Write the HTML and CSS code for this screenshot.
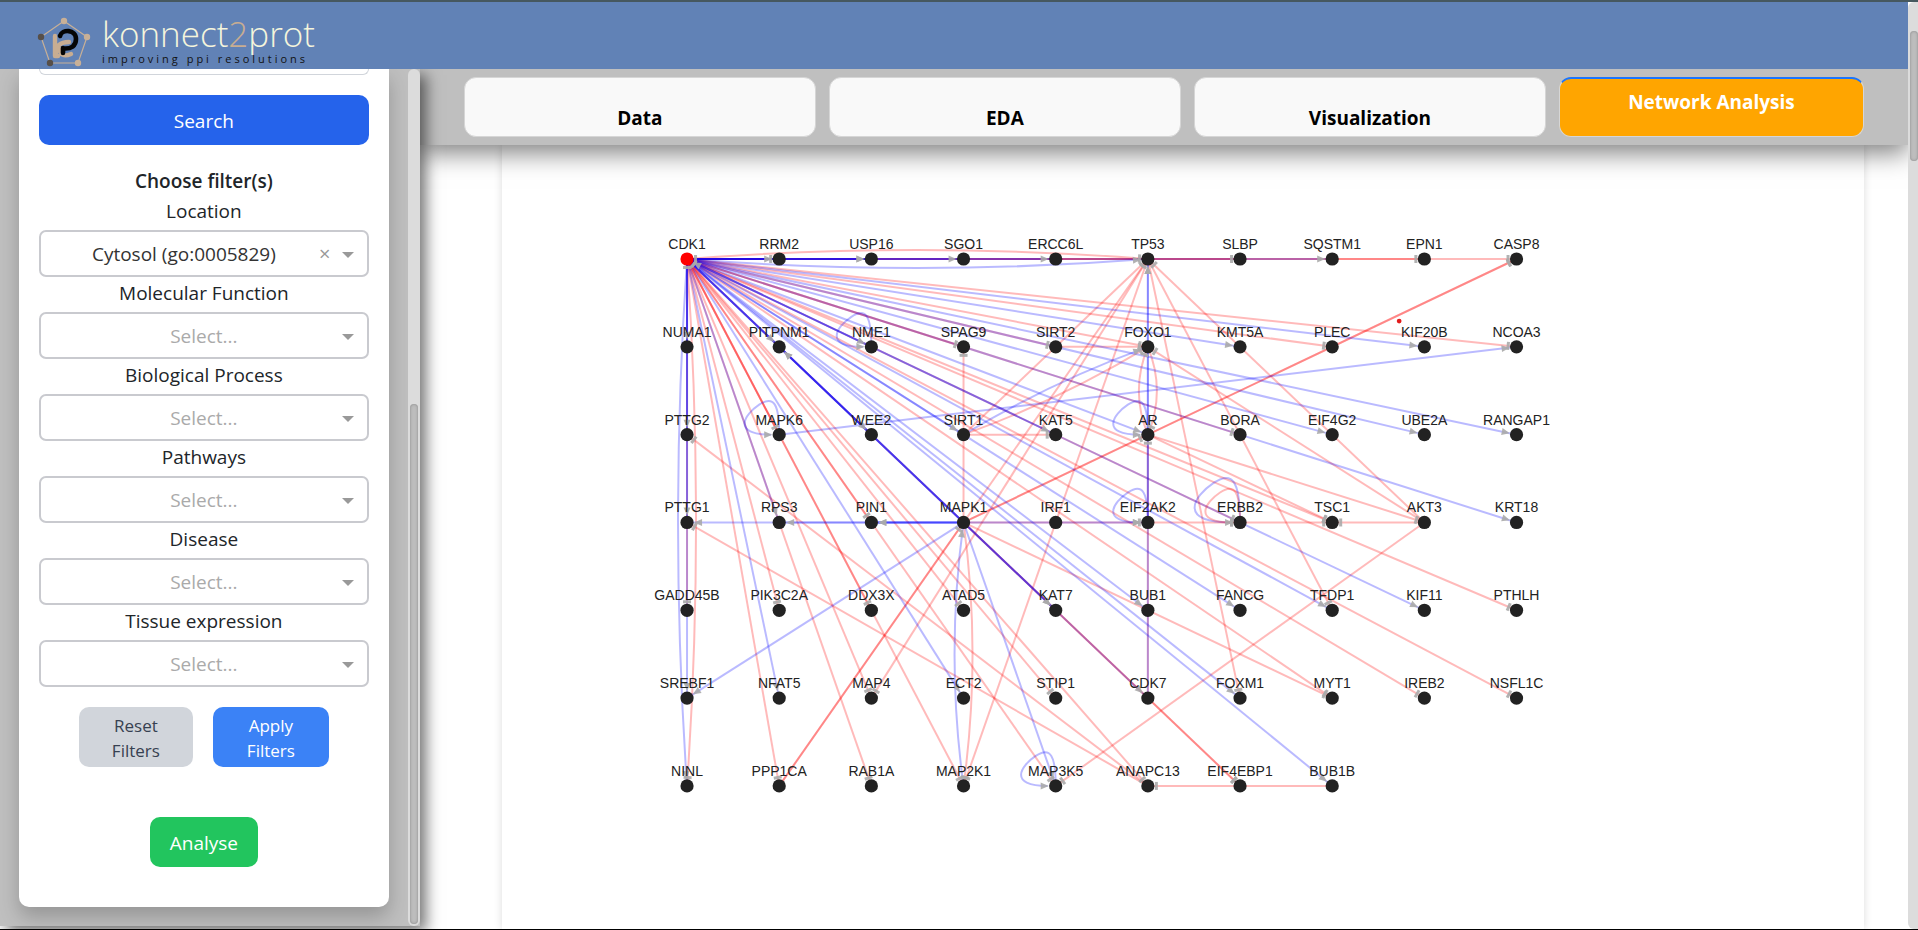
FILE: index.html
```html
<!DOCTYPE html>
<html lang="en">
<head>
<meta charset="utf-8">
<title>konnect2prot</title>
<link rel="stylesheet" href="styles.css">
</head>
<body>
<div class="page">
  <header class="header">
    <svg class="logo-mark" viewBox="0 0 52 52" aria-hidden="true">
      <path d="M26 5 49 21 40 47H12L3 21Z" fill="none" stroke="#c8b097" stroke-width="1.2"/>
      <g fill="none" stroke-linecap="round" stroke-linejoin="round">
        <path d="M17 20V40H20M18 38C18 29 23 26 31 26M22 33C22 39 26 41 33 38" stroke="#c8ad92" stroke-width="4.4"/>
        <path d="M22 20C24 13 38 13 38 23C38 30 33 33 26 32.500M25 32V37" stroke="#050505" stroke-width="4.600"/>
      </g>
      <g fill="#c8b097"><circle cx="26" cy="5" r="3.200"/><circle cx="49" cy="21" r="3.200"/><circle cx="40" cy="47" r="3.200"/></g>
      <g fill="#574f48"><circle cx="3" cy="21" r="3.200"/><circle cx="12" cy="47" r="3.200"/></g>
    </svg>
    <div class="brand">
      <div class="brand-name">konnect<span class="brand-two">2</span>prot</div>
      <div class="brand-tag">improving ppi resolutions</div>
    </div>
  </header>
  <div class="body">
    <aside class="sidebar">
      <form class="card">
        <input class="query" type="text" aria-label="Query">
        <button class="btn search" type="button">Search</button>
        <h2 class="title">Choose filter(s)</h2>
        <label class="label" for="f1">Location</label>
        <div class="select has-value">
          <select id="f1"><option>Cytosol (go:0005829)</option></select>
          <button class="clear" type="button" aria-label="Clear location">×</button>
        </div>
        <label class="label" for="f2">Molecular Function</label>
        <div class="select"><select id="f2"><option>Select...</option></select></div>
        <label class="label" for="f3">Biological Process</label>
        <div class="select"><select id="f3"><option>Select...</option></select></div>
        <label class="label" for="f4">Pathways</label>
        <div class="select"><select id="f4"><option>Select...</option></select></div>
        <label class="label" for="f5">Disease</label>
        <div class="select"><select id="f5"><option>Select...</option></select></div>
        <label class="label" for="f6">Tissue expression</label>
        <div class="select"><select id="f6"><option>Select...</option></select></div>
        <div class="actions">
          <button class="btn reset" type="button">Reset<br>Filters</button>
          <button class="btn apply" type="button">Apply<br>Filters</button>
        </div>
        <button class="btn analyse" type="button">Analyse</button>
      </form>
      <div class="side-scroll"><div class="side-thumb"></div></div>
    </aside>
    <main class="main">
      <nav class="tabs">
        <button class="tab" type="button">Data</button>
        <button class="tab" type="button">EDA</button>
        <button class="tab" type="button">Visualization</button>
        <button class="tab active" type="button">Network Analysis</button>
      </nav>
      <section class="panel">
        <svg class="graph" id="graph" viewBox="0 0 1362 784" role="img" aria-label="Protein interaction network"></svg>
      </section>
    </main>
  </div>
</div>
<div class="page-scroll"><div class="page-thumb"></div></div>
<script src="script.js"></script>
</body>
</html>
```

FILE: styles.css
```css
* { box-sizing: border-box; }

body {
  margin: 0;
  height: 100vh;
  display: grid;
  grid-template-columns: 1fr 10px;
  overflow: hidden;
  border-top: 2px solid #46585f;
  border-bottom: 1px solid #000;
  background: #fff;
  color: #212529;
  font-family: "Open Sans", "Noto Sans", sans-serif;
  font-size: 19px;
}

button, select, input { font: inherit; }

.page {
  display: flex;
  flex-direction: column;
  min-width: 0;
  min-height: 0;
  overflow: hidden;
}

.header {
  position: relative;
  z-index: 3;
  display: flex;
  align-items: center;
  gap: 11px;
  flex: none;
  height: 67px;
  padding: 13px 0 0 37px;
  background: #6182b6;
}

.logo-mark { width: 54px; height: 52px; }
.brand { display: flex; flex-direction: column; }
.brand-name {
  color: #f5f5dc;
  font-size: 35px;
  font-weight: 300;
  line-height: 34px;
}
.brand-two { color: #c8ad92; }
.brand-tag {
  color: #111;
  font-size: 11px;
  line-height: 16px;
  letter-spacing: 3px;
  white-space: nowrap;
}

.body { flex: 1; display: flex; min-height: 0; }

.sidebar {
  position: relative;
  z-index: 2;
  width: 22%;
  display: flex;
  align-items: flex-start;
  justify-content: space-between;
  padding-left: 19px;
  margin-bottom: 3px;
  background: #bfbfbf;
  box-shadow: 6px 6px 14px rgba(0, 0, 0, 0.55);
}

.card {
  flex: 1;
  display: flex;
  flex-direction: column;
  margin-right: 19px;
  padding: 0 20px 40px;
  background: #fff;
  border-radius: 0 0 10px 10px;
  box-shadow: 0 10px 20px rgba(0, 0, 0, 0.22);
}

.query {
  height: 6px;
  margin-bottom: 20px;
  padding: 0;
  border: 1px solid #d1d5db;
  border-top: 0;
  border-radius: 0 0 8px 8px;
}

.btn {
  border: 0;
  border-radius: 10px;
  color: #fff;
  cursor: pointer;
}
.search { height: 50px; padding-top: 2px; background: #2563eb; }

.title {
  margin: 22px 0 0;
  font-size: 19px;
  font-weight: 600;
  line-height: 28px;
  text-align: center;
}

.label { padding-bottom: 2px; line-height: 33px; text-align: center; }

.select { position: relative; height: 47px; }
.select select {
  width: 100%;
  height: 100%;
  padding: 0;
  border: 2px solid #c9cacf;
  border-radius: 7px;
  background: #fff;
  color: #aaa;
  text-align: center;
  text-align-last: center;
  appearance: none;
}
.select::after {
  content: "";
  position: absolute;
  right: 15px;
  top: 22px;
  border: 6px solid transparent;
  border-top-color: #999;
  border-bottom: 0;
  pointer-events: none;
}
.has-value select { padding-right: 40px; color: #333; }
.clear {
  position: absolute;
  right: 36px;
  top: 10px;
  width: 16px;
  padding: 0;
  border: 0;
  background: none;
  color: #999;
  font-size: 20px;
  line-height: 28px;
}

.actions {
  display: flex;
  justify-content: center;
  gap: 20px;
  margin: 20px 0 50px;
}
.actions .btn { height: 60px; font-size: 17px; line-height: 25px; padding: 2px 0 0; }
.reset { width: 114px; background: #d1d5db; }
.btn.reset { color: #374151; }
.apply { width: 116px; background: #3b82f6; }
.analyse { align-self: center; width: 108px; height: 50px; padding-top: 2px; background: #22c55e; }

.side-scroll {
  align-self: stretch;
  width: 12px;
  flex: none;
  display: flex;
  flex-direction: column;
  justify-content: flex-end;
  padding: 2px;
  border-radius: 6px;
  background: #dcdcdc;
}
.side-thumb {
  height: 61%;
  border-radius: 4px;
  background: #bdbdbd;
  box-shadow: inset 0 0 3px #888;
}

.main { flex: 1; min-width: 0; display: flex; flex-direction: column; }

.tabs {
  position: relative;
  z-index: 1;
  display: grid;
  grid-template-columns: 352fr 352fr 352fr 305fr;
  gap: 13px;
  flex: none;
  padding: 8px 44px;
  background: #bfbfbf;
  box-shadow: 0 8px 24px rgba(0, 0, 0, 0.5);
}
.tab {
  height: 60px;
  padding: 22px 0 0;
  border: 1px solid #d6d6d6;
  border-radius: 12px;
  background: #f9f9f9;
  color: #000;
  font-size: 19px;
  font-weight: 700;
}
.tab.active {
  padding: 0 0 12px;
  border-top: 2px solid #1a75ff;
  background: #ffa500;
  color: #fff;
}

.panel {
  flex: 1;
  min-height: 0;
  margin: 0 44px 0 82px;
  background: #fff;
  box-shadow: 0 0 8px rgba(0, 0, 0, 0.14);
}
.graph { display: block; width: 100%; height: auto; }

.edge { fill: none; stroke-width: 2; stroke-opacity: 0.27; }
.pos { stroke: #00f; }
.neg { stroke: #f00; }
.tip { fill: #aaa; fill-opacity: 0.9; }
.node { fill: #222; }
.node.seed { fill: #f00; }
.cursor { fill: #e21b1b; }
.name {
  fill: #222;
  font-family: "Liberation Sans", Arial, sans-serif;
  font-size: 14px;
  text-anchor: middle;
}

.page-scroll { padding: 29px 0 0 2px; background: #dcdcdc; border-radius: 6px 0 0 6px; }
.page-thumb {
  height: 130px;
  border-radius: 4px;
  background: #bdbdbd;
  box-shadow: inset 0 0 3px #888;
}
```

FILE: script.js
```js
const rows = [
  "CDK1 RRM2 USP16 SGO1 ERCC6L TP53 SLBP SQSTM1 EPN1 CASP8",
  "NUMA1 PITPNM1 NME1 SPAG9 SIRT2 FOXO1 KMT5A PLEC KIF20B NCOA3",
  "PTTG2 MAPK6 WEE2 SIRT1 KAT5 AR BORA EIF4G2 UBE2A RANGAP1",
  "PTTG1 RPS3 PIN1 MAPK1 IRF1 EIF2AK2 ERBB2 TSC1 AKT3 KRT18",
  "GADD45B PIK3C2A DDX3X ATAD5 KAT7 BUB1 FANCG TFDP1 KIF11 PTHLH",
  "SREBF1 NFAT5 MAP4 ECT2 STIP1 CDK7 FOXM1 MYT1 IREB2 NSFL1C",
  "NINL PPP1CA RAB1A MAP2K1 MAP3K5 ANAPC13 EIF4EBP1 BUB1B"
];

// Each entry: source, kind (+ activates, - inhibits), targets.
// "name:n" bends the edge sideways by n units at its middle.
// Inhibiting edges lie under the activating ones.
const links = [
  ["CDK1", "-", "RRM2 TP53:9 SLBP EPN1 CASP8 GADD45B NINL:9"],
  ["CDK1", "-", "EIF4EBP1 ERBB2 SPAG9 BORA SIRT2 FOXO1 PLEC NCOA3"],
  ["CDK1", "-", "MAPK6 DDX3X MAP2K1 RAB1A PIK3C2A PPP1CA MAP4 PIN1 MAP3K5 TSC1 PTHLH ATAD5 STIP1 MYT1 IREB2 NSFL1C ANAPC13"],
  ["MAPK1", "-", "EIF2AK2 SPAG9 AR CASP8 MYT1 EIF4EBP1 MAP2K1:9"],
  ["AR", "-", "CASP8 TSC1 FOXO1:9 AKT3"],
  ["PPP1CA", "-", "MAPK1 TP53"],
  ["TP53", "-", "FOXM1 TFDP1 MAP4 MAP2K1"],
  ["SIRT1", "-", "TP53 FOXO1:-5 KAT5"],
  ["SIRT2", "-", "FOXO1"],
  ["AKT3", "-", "TP53 FOXO1 TSC1 MAP3K5"],
  ["FOXO1", "-", "AR:9"],
  ["CDK7", "-", "AR"],
  ["EIF2AK2", "-", "ERBB2"],
  ["ERBB2", "-", "TSC1"],
  ["ANAPC13", "-", "PTTG2 PTTG1"],
  ["BUB1B", "-", "ANAPC13"],
  ["CDK1", "+", "RRM2 USP16 USP16 SGO1 ERCC6L TP53:-9 SQSTM1 NUMA1 PTTG2 PTTG1 SREBF1 NINL:-9"],
  ["CDK1", "+", "PITPNM1 WEE2 KAT7 CDK7 NME1 KAT5 KIF11 KRT18 UBE2A KMT5A KIF20B"],
  ["CDK1", "+", "RPS3 NFAT5 SIRT1 FANCG AR EIF4G2 RANGAP1 ECT2 TFDP1 BUB1 FOXM1 BUB1B"],
  ["MAPK1", "+", "PITPNM1 PITPNM1 KAT7 PIN1 PIN1 RPS3 PTTG1 EIF2AK2 SREBF1 MAP3K5"],
  ["MAP2K1", "+", "MAPK1:9"],
  ["SIRT1", "+", "FOXO1:5"],
  ["CDK7", "+", "TP53"],
  ["EIF2AK2", "+", "TP53"],
  ["MAPK6", "+", "NCOA3"]
];

const loops = [["NME1", 1, "pos"], ["MAPK6", 1, "pos"], ["AR", 1, "pos"], ["EIF2AK2", 1, "pos"],
  ["MAP3K5", 1, "pos"], ["ERBB2", 1.32, "pos"], ["ERBB2", 1, "neg"]];

const graph = document.getElementById("graph");
const at = {};
rows.forEach((row, r) => row.split(" ").forEach((name, c) => {
  at[name] = { x: 185 + c * 92.15, y: 114 + r * 87.8 };
}));

function add(tag, attrs, text) {
  const el = document.createElementNS("http://www.w3.org/2000/svg", tag);
  for (const key in attrs) el.setAttribute(key, attrs[key]);
  if (text) el.textContent = text;
  graph.appendChild(el);
}

function tip(p, angle, kind) {
  const d = kind === "+" ? "M-7 0-15 3.500V-3.500Z" : "M-7-4H-10V4H-7Z";
  add("path", { class: "tip", d, transform: `translate(${p.x} ${p.y}) rotate(${angle * 180 / Math.PI})` });
}

const tips = [];
links.forEach(([from, kind, targets]) => targets.split(" ").forEach(target => {
  const [to, bend] = target.split(":");
  const a = at[from], b = at[to];
  const dx = b.x - a.x, dy = b.y - a.y, len = Math.hypot(dx, dy);
  const k = 2 * (bend || 0);
  const cx = (a.x + b.x) / 2 + k * dy / len;
  const cy = (a.y + b.y) / 2 - k * dx / len;
  add("path", { class: "edge " + (kind === "+" ? "pos" : "neg"), d: `M${a.x} ${a.y}Q${cx} ${cy} ${b.x} ${b.y}` });
  tips.push([b, Math.atan2(b.y - cy, b.x - cx), kind]);
}));

loops.forEach(([name, s, cls]) => {
  const p = at[name];
  add("path", { class: "edge " + cls,
    d: `M${p.x} ${p.y}c0 ${-30 * s} ${-5 * s} ${-40 * s} ${-20 * s} ${-30 * s}s${-28 * s} ${30 * s} ${20 * s - 8} ${30 * s}` });
  tips.push([p, 0, cls === "pos" ? "+" : "-"]);
});

tips.forEach(t => tip(...t));
// Markers of the edges that act back on the seed protein.
["TFDP1", "NUMA1", "RRM2", "WEE2", "MYT1"].forEach(name => {
  const s = at.CDK1, p = at[name];
  tip(s, Math.atan2(s.y - p.y, s.x - p.x), name === "TFDP1" ? "+" : "-");
});

for (const name in at) {
  const p = at[name];
  add("circle", { class: name === "CDK1" ? "node seed" : "node", cx: p.x, cy: p.y, r: 6.6 });
  add("text", { class: "name", x: p.x, y: p.y - 10 }, name);
}
add("circle", { class: "cursor", cx: 897, cy: 176, r: 2.4 });
```
